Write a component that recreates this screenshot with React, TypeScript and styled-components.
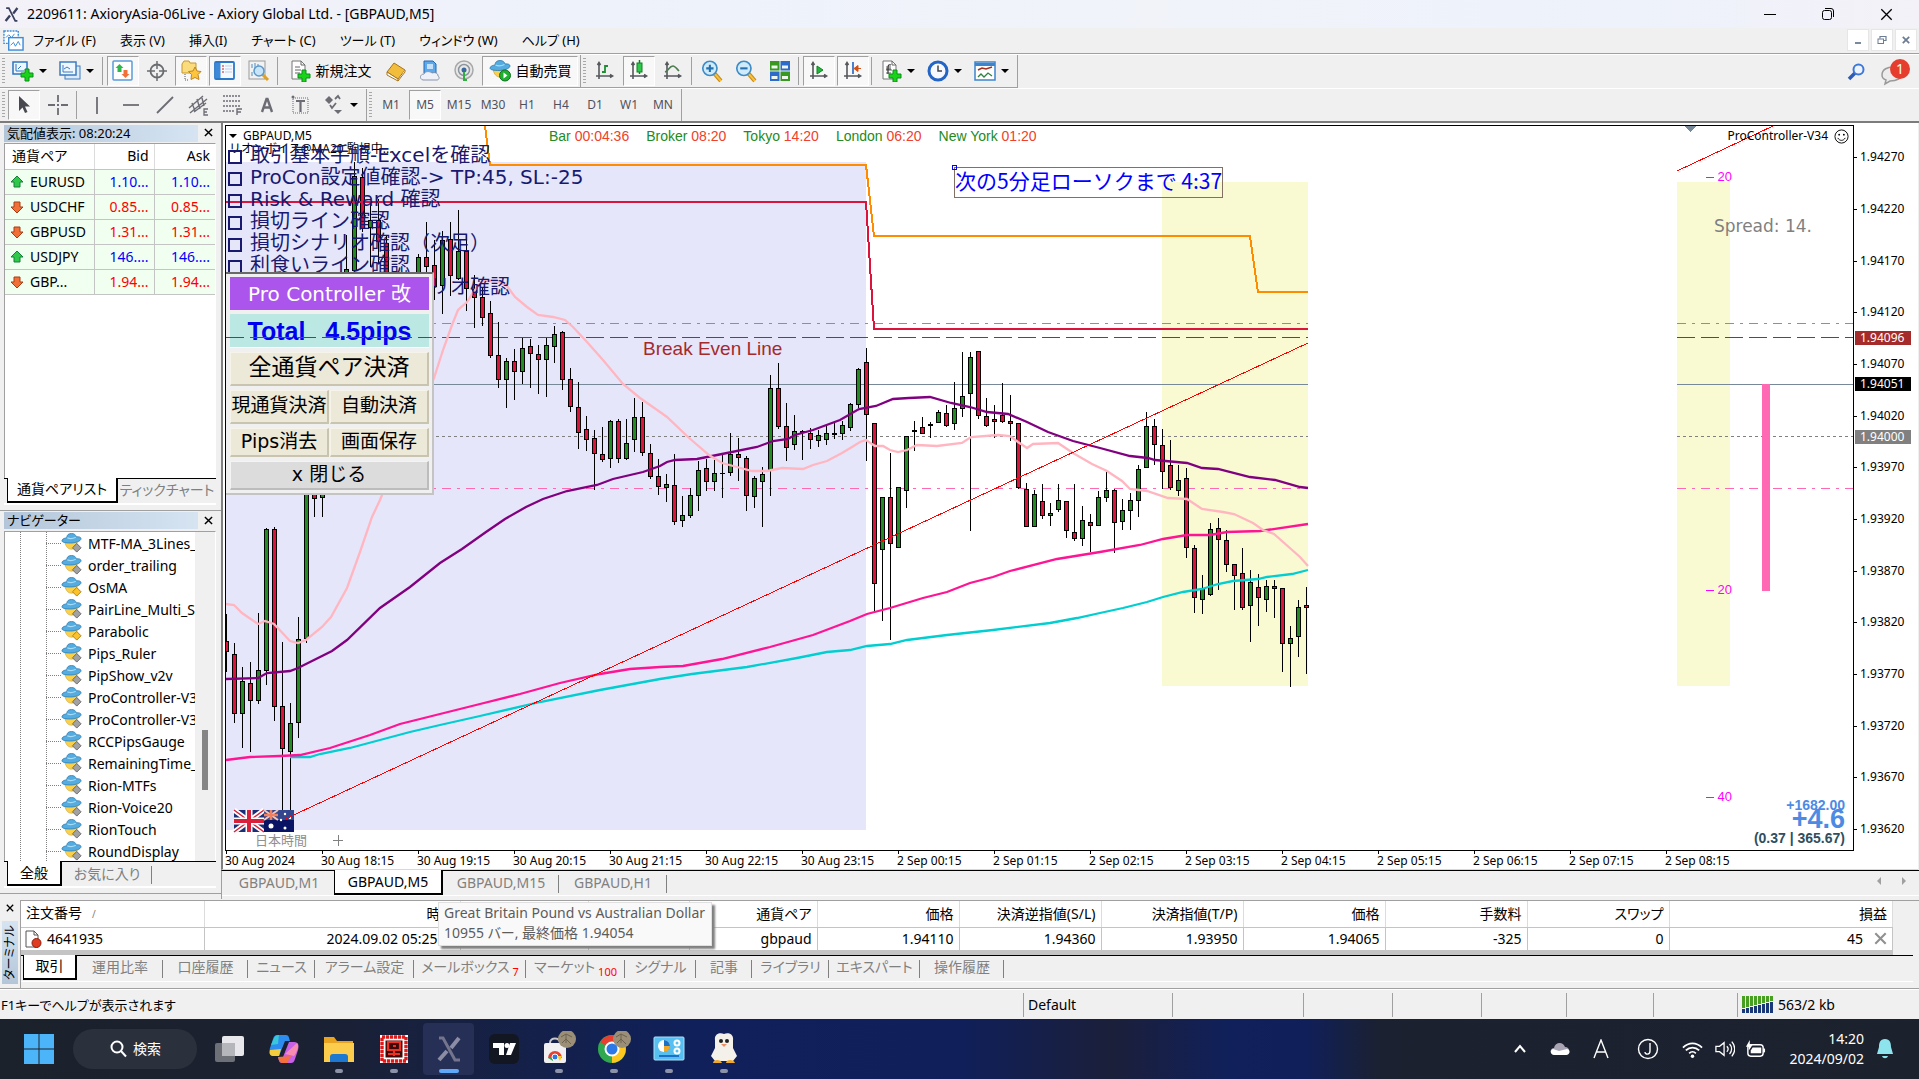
import React from "react";
import styled, { createGlobalStyle, css } from "styled-components";

const UI_FONT = `"Noto Sans", "Noto Sans CJK JP", sans-serif`;
const WIDE_FONT = `"DejaVu Sans", "Noto Sans CJK JP", sans-serif`;
const ARIAL = `"Liberation Sans", "Noto Sans CJK JP", sans-serif`;
const FACE = "#f0f0f0";

const Global = createGlobalStyle`
  * { box-sizing: border-box; }
  body { margin: 0; background: ${FACE}; font-family: ${UI_FONT}; font-size: 14px; line-height: 20px; color: #000; }
  button, input { font: inherit; color: inherit; margin: 0; }
  button { padding: 0; border: 0; background: none; }
  svg { display: block; }
`;

const Desktop = styled.div`
  display: flex;
  flex-direction: column;
  min-height: 100vh;
  overflow: hidden;
`;

/* ---------- title and menu ---------- */

const TitleBar = styled.header`
  display: flex;
  align-items: center;
  height: 28px;
  padding: 0 4px;
  background: linear-gradient(90deg, #f4f1f8, #edf2fb 30%, #f1f3f9 60%, #edf2fb 85%, #f4f1f8);
`;
const Title = styled.h1`
  flex: 1;
  margin: 0 0 0 8px;
  font-size: 14px;
  font-weight: 400;
  white-space: nowrap;
`;
const WindowButton = styled.button`
  display: grid;
  place-items: center;
  width: 58px;
  height: 28px;
`;
const MenuBar = styled.nav`
  display: flex;
  align-items: center;
  height: 26px;
  padding: 0 2px 1px 3px;
  border-bottom: 1px solid #a0a0a0;
`;
const MenuList = styled.div`
  flex: 1;
  display: flex;
  gap: 24px;
  padding-left: 9px;
`;
const MenuItem = styled.button`
  font-size: 13px;
  font-feature-settings: "palt";
  white-space: nowrap;
`;
const ChildButton = styled.button`
  display: grid;
  place-items: center;
  width: 22px;
  height: 22px;
  margin-left: 2px;
  background: #fff;
  border: 1px solid #e6e6e6;
`;

/* ---------- tool bars ---------- */

const ToolRow = styled.div<{ $last?: boolean }>`
  display: flex;
  height: ${(p) => (p.$last ? 35 : 34)}px;
  border-top: 1px solid #fff;
  ${(p) => p.$last && css`border-bottom: 2px solid #7c7c7c;`}
`;
const ToolGroup = styled.div<{ $line?: boolean }>`
  display: flex;
  align-items: center;
  padding: 0 1px 0 7px;
  border-right: 1px solid #a0a0a0;
  ${(p) => p.$line && css`border-bottom: 1px solid #a0a0a0;`}
  background: repeating-linear-gradient(180deg, #a8a8a8 0 1px, ${FACE} 1px 3px) 2px 3px / 3px 26px no-repeat;
`;
const ToolButton = styled.button<{ $w?: number; $on?: boolean }>`
  display: flex;
  align-items: center;
  justify-content: center;
  gap: 5px;
  width: ${(p) => p.$w ?? 32}px;
  height: 30px;
  margin: 0 1px;
  border: 1px solid transparent;
  white-space: nowrap;
  ${(p) => p.$on && css`background: #f8f8f8; border-color: #a0a0a0 #fff #fff #a0a0a0;`}
`;
const SplitButton = styled(ToolButton)`
  width: 45px;
  justify-content: flex-start;
  padding-left: 3px;
`;
const PeriodButton = styled(ToolButton)`
  font-size: 12px;
  color: #50505c;
`;
const Divider = styled.span`
  width: 1px;
  height: 28px;
  margin: 0 3px 0 1px;
  background: #a0a0a0;
`;
const Caret = styled.span`
  border: 4px solid transparent;
  border-top-color: #000;
  border-bottom: 0;
`;
const ToolEnd = styled.div`
  flex: 1;
  display: flex;
  justify-content: flex-end;
  align-items: center;
  gap: 12px;
  padding-right: 8px;
`;
const Notice = styled.button`
  position: relative;
  width: 32px;
  height: 28px;
`;
const Badge = styled.span`
  position: absolute;
  top: 1px;
  right: 1px;
  width: 20px;
  height: 20px;
  border-radius: 50%;
  background: #e53e2e;
  color: #fff;
`;

/* ---------- docked panels ---------- */

const Workspace = styled.main`
  flex: 1;
  display: grid;
  grid-template-columns: 221px minmax(0, 1fr);
`;
const Dock = styled.aside`
  display: flex;
  flex-direction: column;
  min-height: 0;
  padding-bottom: 5px;
`;
const Panel = styled.section<{ $grow: number }>`
  flex: ${(p) => p.$grow} 1 0;
  display: flex;
  flex-direction: column;
  min-height: 0;
  padding: 0 3px 5px 4px;
  border-bottom: 1px solid #a0a0a0;
`;
const PanelHead = styled.div`
  display: flex;
  align-items: center;
  height: 19px;
  margin-bottom: 1px;
`;
const PanelTitle = styled.h2`
  flex: 1;
  margin: 1px 0 0;
  padding-left: 3px;
  font-size: 13px;
  font-weight: 400;
  line-height: 17px;
  font-feature-settings: "palt";
  background: linear-gradient(90deg, #b3c6d9, #d6e4f2);
`;
const CloseButton = styled.button`
  display: grid;
  place-items: center;
  width: 20px;
  height: 18px;
`;
const PanelBox = styled.div`
  flex: 1;
  display: flex;
  flex-direction: column;
  min-height: 0;
  margin-right: 2px;
  overflow: hidden;
  background: #fff;
  border: 1px solid #a0a0a0;
  border-right-color: #fff;
  border-bottom: 0;
`;
const Quotes = styled.table`
  width: 100%;
  border-collapse: collapse;
  table-layout: fixed;
  th, td { height: 25px; padding: 0 5px; font-weight: 400; text-align: right; border: 1px solid #c4c4c4; border-left: 0; white-space: nowrap; }
  th { border-color: #dcdcdc; border-top: 0; border-bottom-color: #c4c4c4; font-feature-settings: "palt"; }
  th:first-child { text-align: left; padding-left: 7px; width: 89px; }
  th:last-child { width: 61px; }
  th:last-child, td:last-child { border-right: 0; }
  td { background: #f0fff0; }
`;
const Pair = styled.span`
  display: flex;
  align-items: center;
  gap: 6px;
`;
const Quote = styled.td<{ $up: boolean }>`
  color: ${(p) => (p.$up ? "#0000ff" : "#ff0000")};
`;
const Tabs = styled.div`
  display: flex;
  height: 27px;
  margin-right: 2px;
  padding-left: 3px;
  border-top: 1px solid #000;
  border-bottom: 2px solid #fff;
`;
const Tab = styled.button<{ $on?: boolean; $w: number; $bar?: boolean }>`
  position: relative;
  width: ${(p) => p.$w}px;
  height: 25px;
  margin-top: -1px;
  flex: none;
  color: #808080;
  font-feature-settings: "palt";
  white-space: nowrap;
  ${(p) => p.$on && css`color: #000; background: #fff; border: 1px solid #000; border-top: 0; border-right-width: 2px; border-bottom-width: 2px;`}
  ${(p) => p.$bar && css`background: linear-gradient(#808080, #808080) right 5px / 1px 18px no-repeat;`}
`;
const Count = styled.sub`
  font-size: 11px;
  line-height: 0;
  color: #ff0000;
`;
const Tree = styled.div`
  flex: 1;
  display: flex;
  min-height: 0;
`;
const Branches = styled.ul`
  flex: 1;
  min-width: 0;
  margin: 0;
  padding: 1px 0 0 15px;
  list-style: none;
  overflow: hidden;
  background: repeating-linear-gradient(180deg, #808080 0 1px, #fff 1px 2px) 15px 0 / 1px 100% no-repeat,
    repeating-linear-gradient(180deg, #808080 0 1px, #fff 1px 2px) 41px 0 / 1px 100% no-repeat;
`;
const Branch = styled.li`
  display: flex;
  align-items: center;
  height: 22px;
  padding-left: 26px;
  white-space: nowrap;
  &::before {
    content: "";
    flex: none;
    width: 15px;
    height: 1px;
    background: repeating-linear-gradient(90deg, #808080 0 1px, #fff 1px 2px);
  }
  svg { flex: none; margin-right: 6px; }
`;
const ScrollTrack = styled.div`
  flex: none;
  width: 20px;
  display: flex;
  align-items: flex-start;
  justify-content: center;
  background: ${FACE};
`;
const Thumb = styled.span`
  width: 6px;
  height: 60px;
  margin-top: 198px;
  background: #858585;
`;

/* ---------- chart ---------- */

const ChartWindow = styled.section`
  display: flex;
  flex-direction: column;
  min-width: 0;
`;
const ChartSheet = styled.div`
  flex: 1;
  display: grid;
  grid-template-columns: minmax(0, 1fr) 64px;
  grid-template-rows: minmax(0, 1fr) 18px;
  padding: 2px 0 0 2px;
  margin-right: 1px;
  background: #fff;
  border-left: 2px solid #808080;
  border-bottom: 1px solid #d8d8d8;
`;
const Plot = styled.div`
  position: relative;
  overflow: hidden;
  border: 1px solid #000;
  > svg { width: 100%; height: 100%; }
`;
const PriceAxis = styled.div`
  position: relative;
  font-size: 12px;
  line-height: 14px;
`;
const Price = styled.span<{ $y: number; $bg?: string }>`
  position: absolute;
  left: ${(p) => (p.$bg ? 1 : 0)}px;
  top: ${(p) => p.$y}%;
  margin-top: -7px;
  width: 56px;
  padding-left: ${(p) => (p.$bg ? 5 : 6)}px;
  ${(p) =>
    p.$bg
      ? css`background: ${p.$bg}; color: #fff;`
      : css`background: linear-gradient(#000, #000) 0 7px / 3px 1px no-repeat;`}
`;
const TimeAxis = styled.div`
  display: flex;
  overflow: hidden;
  font-size: 12px;
  line-height: 20px;
`;
const Time = styled.span`
  flex: 0 0 96px;
  white-space: nowrap;
  background: linear-gradient(#000, #000) 1px 0 / 1px 3px no-repeat;
`;
const ChartTabs = styled.div`
  display: flex;
  align-items: flex-start;
  height: 29px;
  padding-left: 2px;
  border-top: 1px solid #000;
  border-left: 1px solid #a0a0a0;
  box-shadow: inset 0 -3px ${FACE}, inset 0 -4px #fff;
`;
const TabArrows = styled.div`
  flex: 1;
  display: flex;
  justify-content: flex-end;
  gap: 14px;
  padding: 5px 10px 0 0;
`;

/* Labels that float over the plot */
const Floating = styled.div<{ $x?: number; $r?: number; $y: number; $size?: number; $color?: string; $bold?: boolean; $font?: string }>`
  position: absolute;
  ${(p) => (p.$r !== undefined ? css`right: ${p.$r}px;` : css`left: ${p.$x}px;`)}
  top: ${(p) => p.$y}px;
  font-family: ${(p) => p.$font ?? UI_FONT};
  font-size: ${(p) => p.$size ?? 12}px;
  line-height: 20px;
  font-weight: ${(p) => (p.$bold ? 700 : 400)};
  color: ${(p) => p.$color ?? "#000"};
  white-space: nowrap;
`;
const ChartName = styled(Floating)`
  display: flex;
  align-items: center;
  gap: 6px;
`;
const Clocks = styled(Floating)`
  display: flex;
  gap: 17px;
  color: #228b22;
  b { font-weight: 400; color: #f0402a; }
`;
const Countdown = styled(Floating)`
  height: 31px;
  line-height: 25px;
  border: 1px solid #827062;
  &::before {
    content: "";
    position: absolute;
    left: -3px;
    top: -3px;
    width: 3px;
    height: 3px;
    border: 1px solid #0000ff;
  }
`;
const CheckList = styled.ul`
  position: absolute;
  left: 2px;
  top: 18px;
  margin: 0;
  padding: 0;
  list-style: none;
  font-family: ${WIDE_FONT};
  font-size: 20px;
  line-height: 22px;
  color: #191970;
`;
const CheckItem = styled.li<{ $tail?: boolean }>`
  height: 22px;
  white-space: nowrap;
  padding-left: ${(p) => (p.$tail ? 202 : 0)}px;
`;
const CheckLabel = styled.label`
  display: flex;
  align-items: center;
  gap: 8px;
`;
const Check = styled.input`
  appearance: none;
  width: 14px;
  height: 14px;
  margin-top: 4px;
  border: 2px solid #191970;
`;
const Controller = styled.form`
  position: absolute;
  left: 0;
  top: 146px;
  width: 208px;
  display: grid;
  grid-template-columns: 1fr 1fr;
  gap: 4px 1px;
  padding: 3px 3px 3px 4px;
  background: ${FACE};
  border-top: 2px solid #696969;
  border-right: 2px solid #c4c4c4;
  border-bottom: 2px solid #c4c4c4;
  font-family: ${WIDE_FONT};
  font-size: 20px;
  &::after {
    content: "";
    position: absolute;
    left: 0;
    right: 0;
    top: 63px;
    height: 1px;
    background: repeating-linear-gradient(90deg, #a52a2a 0 18px, transparent 18px 24px);
  }
`;
const ControllerTitle = styled.div`
  grid-column: span 2;
  height: 33px;
  line-height: 34px;
  text-align: center;
  color: #fff;
  background: #ac55ec;
`;
const Total = styled.output`
  grid-column: span 2;
  display: flex;
  justify-content: center;
  gap: 20px;
  height: 34px;
  line-height: 35px;
  font-family: ${ARIAL};
  font-size: 25px;
  font-weight: 700;
  color: #0000f0;
  background: #bce8e4;
  border-bottom: 1px solid #fff;
`;
const Action = styled.button<{ $wide?: boolean; $h: number; $grey?: boolean; $size?: number }>`
  ${(p) => p.$wide && css`grid-column: span 2;`}
  height: ${(p) => p.$h}px;
  padding-bottom: 3px;
  font-size: ${(p) => p.$size ?? 19}px;
  line-height: 24px;
  white-space: nowrap;
  overflow: hidden;
  background: ${(p) => (p.$grey ? "#dcdcdc" : "#ece9d8")};
  border: solid;
  border-width: 1px 2px 2px 1px;
  border-color: ${(p) => (p.$grey ? "#f4f4f4 #bcbcbc #bcbcbc #f4f4f4" : "#f6f4ea #c8c4b0 #c8c4b0 #f6f4ea")};
`;

/* ---------- terminal ---------- */

const Terminal = styled.section`
  position: relative;
  display: grid;
  grid-template-columns: 20px minmax(0, 1fr);
  height: 90px;
  border-bottom: 1px solid #a0a0a0;
`;
const TerminalSide = styled.div`
  display: flex;
  flex-direction: column;
  align-items: center;
  gap: 4px;
`;
const TerminalTitle = styled.h2`
  flex: 1;
  width: 16px;
  margin: 0 0 4px;
  padding-top: 4px;
  font-size: 12px;
  line-height: 16px;
  font-weight: 400;
  font-feature-settings: "palt";
  writing-mode: vertical-rl;
  text-orientation: sideways;
  transform: rotate(180deg);
  white-space: nowrap;
  background: linear-gradient(0deg, #d6e4f2, #b3c6d9);
`;
const TerminalBody = styled.div`
  margin-top: 1px;
  border-top: 1px solid #a0a0a0;
  border-left: 1px solid #a0a0a0;
`;
const Orders = styled.table`
  width: calc(100% - 26px);
  border-collapse: collapse;
  table-layout: fixed;
  background: #fff;
  border-bottom: 5px solid #c4c4c4;
  th, td { height: 25px; padding: 0 5px; font-weight: 400; line-height: 20px; text-align: right; white-space: nowrap; border-right: 1px solid #dcdcdc; }
  th { height: 26px; border-bottom: 1px solid #c4c4c4; font-feature-settings: "palt"; }
  td { border-color: #c4c4c4; }
  th:first-child { text-align: left; }
  td:first-child { padding-left: 3px; }
`;
const OrderId = styled.span`
  display: flex;
  align-items: center;
  gap: 5px;
`;
const SortMark = styled.span`
  margin-left: 10px;
  font-size: 10px;
  color: #808080;
`;
const OpenTime = styled.td`
  && { padding-right: 22px; }
`;
const Profit = styled.span`
  display: flex;
  align-items: center;
  justify-content: flex-end;
  gap: 11px;
`;
const TerminalTabs = styled(Tabs)`
  margin-right: 6px;
  padding-left: 2px;
  border-bottom: 1px solid #fff;
`;
const Hint = styled.div`
  position: absolute;
  left: 438px;
  top: 3px;
  width: 274px;
  height: 44px;
  padding: 0 5px;
  color: #5c5c5c;
  background: #f9f9f9;
  border: 1px solid #e0e0e0;
  box-shadow: 3px 3px 2px #808080;
  white-space: nowrap;
  font-feature-settings: "palt";
`;

const StatusBar = styled.footer`
  display: flex;
  align-items: center;
  height: 30px;
  padding: 0 0 0 1px;
  border-top: 1px solid #fff;
  font-feature-settings: "palt";
`;
const StatusText = styled.span`
  flex: 1;
  font-size: 13px;
`;
const StatusCell = styled.span<{ $w: number }>`
  display: flex;
  align-items: center;
  gap: 4px;
  width: ${(p) => p.$w}px;
  height: 24px;
  padding-left: 4px;
  border-left: 1px solid #a0a0a0;
  white-space: nowrap;
`;

/* ---------- task bar ---------- */

const TaskBar = styled.footer`
  display: flex;
  align-items: center;
  height: 60px;
  padding: 0 23px 0 12px;
  color: #fff;
  background: linear-gradient(90deg, #1b222b 0, #1b2130 15%, #10205a 36%, #101f5a 50%, #1b1f3a 58%, #10205a 64%, #101f5a 68%, #1b2130 72%, #1c222d 100%);
`;
const Start = styled.button`
  display: grid;
  place-items: center;
  width: 54px;
  height: 50px;
`;
const Search = styled.button`
  display: flex;
  align-items: center;
  justify-content: center;
  gap: 6px;
  width: 124px;
  height: 40px;
  margin: 0 4px 0 7px;
  border-radius: 20px;
  background: #2b313c;
`;
const App_ = styled.button<{ $state?: "open" | "active" }>`
  display: grid;
  justify-items: center;
  align-content: end;
  gap: 4px;
  width: 51px;
  height: 52px;
  margin: 0 2px;
  padding-bottom: 2px;
  border-radius: 4px;
  ${(p) => p.$state === "active" && css`background: #262f56;`}
  &::after {
    content: "";
    width: ${(p) => (p.$state === "active" ? 20 : 8)}px;
    height: 4px;
    border-radius: 2px;
    background: ${(p) => (p.$state === "active" ? "#60a8f8" : p.$state ? "#8c92a8" : "transparent")};
  }
`;
const Tray = styled.div`
  flex: 1;
  display: flex;
  align-items: center;
  justify-content: flex-end;
`;
const TrayButton = styled.button<{ $w: number }>`
  display: grid;
  place-items: center;
  width: ${(p) => p.$w}px;
  height: 40px;
`;
const Clock = styled.time`
  width: 94px;
  margin-right: 10px;
  font-size: 14px;
  line-height: 20px;
  text-align: right;
`;

/* ---------- icons ---------- */

type Draw = { children: React.ReactNode; s?: number; box?: number };
const Icon = ({ children, s = 22, box = 22 }: Draw) => (
  <svg width={s} height={s} viewBox={`0 0 ${box} ${box}`} fill="none" aria-hidden="true">{children}</svg>
);
const Plus = ({ x = 14, y = 15 }) => (
  <path d={`M${x - 2} ${y - 6}h4v4h4v4h-4v4h-4v-4h-4v-4h4z`} fill="#19d319" stroke="#0a8f1a" />
);
const Axes = () => <path d="M5 3v16M2 16h16M3.500 5L5 2.500 6.500 5M16 14.500l2.500 1.500-2.500 1.500" stroke="#55585c" strokeWidth="1.600" />;
const Sheet = () => (
  <>
    <path d="M3 1h9l4 4v14H3z" fill="#fdfdfd" stroke="#777" />
    <path d="M12 1v4h4M6 7h5M6 10h6M6 13h5" stroke="#666" />
  </>
);
const Lens = ({ sign }: { sign: string }) => (
  <Icon s={23}>
    <path d="M13 13l6 7" stroke="#c98a10" strokeWidth="4" /><path d="M13 13l6 7" stroke="#f6c244" strokeWidth="2" />
    <circle cx="8.500" cy="8" r="6.800" fill="#cfeafa" stroke="#3c8cc8" strokeWidth="1.600" />
    <path d={sign} stroke="#2471b0" strokeWidth="2" />
  </Icon>
);
const Hat = ({ tag }: { tag: React.ReactNode }) => (
  <>
    <path d="M4 9c1 6 4 8 7 8s6-3 6-8z" fill="#fbd04a" stroke="#c49a2c" strokeWidth=".6" />
    <path d="M1 8c0-2 4-3 5-3 0-3 2-4.500 5-4.500S15.500 2 16 4c3-.5 5 .5 5 2 0 2.500-6 4.500-11 4.500S1 10 1 8z" fill="#54ace0" stroke="#2c7cb0" strokeWidth=".8" />
    <path d="M6.500 5c3 1.500 6 1 9-.5" stroke="#a6dcf6" strokeWidth="1.200" />
    {tag}
  </>
);
const HatIcon = ({ gold }: { gold?: boolean }) => (
  <Icon s={21}>
    <Hat tag={<path d="M16.500 11l4.500 4.500-4.500 4.500-4.500-4.500z" fill={gold ? "#fcc22c" : "#a2a2a2"} stroke={gold ? "#b07c10" : "#666"} />} />
  </Icon>
);
const Arrow = ({ up }: { up: boolean }) => (
  <Icon s={14} box={14}>
    {up ? <path d="M7 1l6 6h-3v5H4V7H1z" fill="#2fc84a" stroke="#14803a" /> : <path d="M7 13l6-6h-3V2H4v5H1z" fill="#f07038" stroke="#a83c14" />}
  </Icon>
);
const Cross = ({ s = 9, c = "#000", w = 1.6 }) => (
  <svg width={s} height={s} viewBox="0 0 10 10" aria-hidden="true"><path d="M1 1l8 8M9 1L1 9" stroke={c} strokeWidth={w} /></svg>
);
const AxioryMark = ({ s = 14, c = "#3a3f5c" }) => (
  <svg width={s} height={s} viewBox="0 0 14 14" fill="none" aria-hidden="true">
    <path d="M2 1h2.500l6 12h2" stroke={c} strokeWidth="1.600" /><path d="M12.500 1L8.600 6.200M5.600 8L1.500 13" stroke={c} strokeWidth="2.200" />
  </svg>
);
const Avatar = () => (
  <>
    <circle cx="25" cy="8" r="9" fill="#9b8f78" /><path d="M19 6l5-3 6 3M20 12l4-4 5 5M24 3v9" stroke="#6c624f" />
  </>
);

/* ---------- data ---------- */

type Candle = [number, number, number, number, number, 0 | 1];
/* bar index, high, body top, body bottom, low, rising */
const candles: Candle[] = [
  [0, 614, 641, 652, 672, 0], [1, 643, 654, 714, 723, 0], [2, 667, 681, 714, 748, 1], [3, 662, 683, 701, 752, 0],
  [4, 613, 670, 701, 704, 1], [5, 528, 529, 671, 685, 1], [6, 527, 529, 707, 721, 0], [7, 642, 706, 749, 815, 0],
  [8, 703, 723, 752, 815, 1], [9, 617, 639, 723, 738, 1], [10, 400, 400, 639, 643, 1], [11, 440, 440, 499, 517, 0],
  [12, 440, 440, 498, 517, 1], [15, 235, 269, 400, 400, 1], [16, 162, 176, 271, 272, 1], [17, 168, 177, 229, 232, 0],
  [18, 203, 220, 228, 267, 1], [19, 199, 220, 242, 263, 0], [20, 235, 243, 300, 300, 0], [24, 254, 257, 277, 290, 1],
  [25, 222, 257, 267, 290, 0], [26, 240, 265, 287, 300, 0], [27, 231, 240, 286, 314, 1], [28, 222, 239, 276, 296, 0],
  [29, 210, 251, 279, 280, 1], [30, 235, 251, 289, 311, 0], [31, 275, 289, 298, 328, 0], [32, 287, 297, 318, 326, 0],
  [33, 301, 313, 356, 358, 0], [34, 322, 355, 380, 388, 0], [35, 358, 361, 380, 408, 1], [36, 349, 361, 372, 400, 0],
  [37, 338, 348, 372, 384, 1], [38, 339, 346, 354, 388, 0], [39, 345, 354, 360, 394, 0], [40, 338, 345, 360, 397, 1],
  [41, 326, 334, 347, 363, 1], [42, 331, 332, 380, 390, 0], [43, 368, 379, 407, 412, 0], [44, 382, 407, 433, 449, 0],
  [45, 416, 429, 440, 451, 0], [46, 430, 438, 454, 490, 0], [47, 427, 454, 460, 462, 0], [48, 420, 421, 459, 468, 1],
  [49, 419, 421, 459, 463, 0], [50, 419, 443, 459, 460, 1], [51, 398, 417, 440, 452, 1], [52, 402, 417, 453, 456, 0],
  [53, 444, 453, 477, 479, 0], [54, 459, 476, 487, 495, 0], [55, 474, 484, 488, 502, 1], [56, 454, 485, 522, 525, 0],
  [57, 496, 515, 521, 527, 1], [58, 488, 495, 516, 518, 1], [59, 461, 470, 496, 511, 1], [60, 459, 468, 482, 491, 0],
  [61, 460, 473, 482, 491, 1], [62, 453, 473, 474, 498, 0], [63, 433, 454, 473, 476, 1], [64, 438, 454, 458, 481, 0],
  [65, 456, 458, 496, 511, 0], [66, 476, 478, 497, 508, 1], [67, 467, 474, 482, 527, 1], [68, 375, 388, 470, 496, 1],
  [69, 363, 388, 427, 429, 0], [70, 403, 426, 448, 461, 0], [71, 415, 431, 445, 450, 1], [72, 430, 431, 433, 460, 0],
  [73, 428, 433, 440, 449, 0], [74, 430, 435, 441, 447, 1], [75, 426, 433, 440, 445, 1], [76, 422, 433, 435, 439, 0],
  [77, 421, 425, 434, 440, 1], [78, 403, 404, 428, 431, 1], [79, 368, 369, 405, 408, 1], [80, 348, 362, 415, 461, 0],
  [81, 423, 423, 584, 611, 0], [82, 497, 497, 550, 621, 1], [83, 453, 497, 544, 640, 0], [84, 487, 487, 548, 548, 1],
  [85, 436, 436, 491, 508, 1], [86, 421, 430, 432, 451, 0], [87, 417, 427, 434, 434, 0], [88, 422, 424, 426, 438, 0],
  [89, 410, 412, 423, 423, 1], [90, 405, 413, 426, 427, 0], [91, 382, 408, 424, 430, 1], [92, 352, 396, 409, 417, 1],
  [93, 352, 357, 394, 531, 1], [94, 351, 351, 416, 419, 0], [95, 398, 416, 426, 427, 0], [96, 405, 419, 422, 438, 0],
  [97, 383, 415, 422, 423, 0], [98, 395, 421, 424, 441, 0], [99, 423, 423, 488, 489, 0], [100, 483, 489, 527, 527, 0],
  [101, 490, 494, 527, 527, 1], [102, 484, 501, 516, 519, 0], [103, 503, 513, 516, 526, 1], [104, 484, 500, 510, 512, 1],
  [105, 501, 501, 531, 538, 0], [106, 484, 532, 539, 541, 0], [107, 506, 520, 539, 546, 1], [108, 514, 522, 526, 552, 0],
  [109, 491, 497, 526, 526, 1], [110, 472, 490, 498, 502, 1], [111, 489, 490, 523, 553, 0], [112, 499, 510, 522, 530, 1],
  [113, 493, 500, 511, 530, 1], [114, 465, 469, 501, 517, 1], [115, 412, 426, 468, 468, 1], [116, 419, 426, 445, 465, 0],
  [117, 429, 445, 472, 489, 0], [118, 440, 465, 488, 490, 0], [119, 465, 480, 491, 496, 1], [120, 468, 478, 548, 558, 0],
  [121, 545, 548, 598, 613, 0], [122, 575, 588, 600, 614, 1], [123, 523, 529, 595, 596, 1], [124, 518, 528, 540, 590, 0],
  [125, 530, 540, 565, 572, 0], [126, 564, 564, 576, 610, 0], [127, 548, 573, 608, 610, 0], [128, 570, 582, 606, 642, 1],
  [129, 574, 587, 598, 626, 0], [130, 580, 586, 600, 612, 1], [131, 580, 586, 589, 618, 0], [132, 588, 588, 644, 672, 0],
  [133, 626, 638, 644, 687, 1], [134, 600, 607, 637, 657, 1], [135, 587, 605, 608, 674, 0],
];

const averages: [string, string][] = [
  ["#00ced1", "290,757 310,757 320,754 350,748 380,740 410,732 440,725 480,716 540,702 600,690 660,679 692,674 747,667 797,658 827,652 850,650 867,646 890,644 907,640 947,635 993,630 1050,623 1077,618 1100,613 1123,608 1147,602 1163,597 1183,592 1202,589 1218,584 1233,581 1258,579 1267,577 1292,574 1308,570"],
  ["#ff1493", "226,760 250,757 280,756 300,755 330,748 370,735 400,724 440,714 480,704 520,694 560,683 600,674 630,669 660,667 683,666 722,659 770,647 813,635 850,621 867,614 890,608 923,598 947,592 970,583 993,577 1010,571 1057,559 1100,552 1140,545 1163,539 1187,535 1210,535 1227,532 1260,531 1308,524"],
  ["#800080", "226,679 258,678 267,673 290,671 298,668 310,662 332,651 347,640 380,608 410,587 440,563 462,549 486,532 505,519 526,507 543,499 567,491 597,485 613,479 643,472 660,466 667,462 675,460 697,459 722,454 757,447 773,441 788,439 795,435 813,430 840,420 859,409 876,406 893,399 909,398 930,397 951,403 970,407 987,412 1008,414 1027,422 1048,432 1073,441 1100,448 1130,456 1148,458 1155,460 1187,463 1202,468 1218,469 1250,477 1275,480 1300,487 1308,488"],
  ["#ffb6c1", "226,604 234,605 242,613 258,624 265,621 274,624 290,641 298,643 306,640 322,627 331,617 347,588 360,552 372,517 380,500 400,450 434,378 443,350 452,325 458,310 467,302 474,291 483,281 497,281 507,286 515,297 527,307 538,315 553,317 565,320 573,327 587,342 603,360 623,384 640,398 660,412 667,417 688,437 709,455 722,463 737,467 752,471 767,471 782,468 803,469 813,465 827,461 842,453 852,447 860,442 866,440 875,446 883,446 890,450 898,452 907,450 917,445 937,446 962,443 971,437 998,435 1010,436 1018,442 1027,448 1033,444 1058,443 1073,453 1092,464 1107,471 1122,481 1130,489 1147,491 1168,498 1187,499 1202,509 1223,512 1234,514 1253,523 1263,530 1274,534 1300,557 1308,566"],
];

const levels: [number, string, string?][] = [
  [323, "#32cd50", "9 6 3 6"], [337, "#a52a2a", "18 6"], [384, "#778899"], [436, "#808080", "3 3"], [488, "#ff69b4", "9 6 3 6"],
];

const prices: [string, number][] = [
  ["1.94270", 157], ["1.94220", 209], ["1.94170", 261], ["1.94120", 312], ["1.94070", 364], ["1.94020", 416], ["1.93970", 467],
  ["1.93920", 519], ["1.93870", 571], ["1.93820", 622], ["1.93770", 674], ["1.93720", 726], ["1.93670", 777], ["1.93620", 829],
];
const tags: [string, number, string][] = [["1.94096", 338, "#a52a2a"], ["1.94051", 384, "#000"], ["1.94000", 437, "#808080"]];
const share = (y: number) => ((y - 125) / 726) * 100;

const times = [
  "30 Aug 2024", "30 Aug 18:15", "30 Aug 19:15", "30 Aug 20:15", "30 Aug 21:15", "30 Aug 22:15", "30 Aug 23:15", "2 Sep 00:15",
  "2 Sep 01:15", "2 Sep 02:15", "2 Sep 03:15", "2 Sep 04:15", "2 Sep 05:15", "2 Sep 06:15", "2 Sep 07:15", "2 Sep 08:15",
];
const quotes: [string, string, boolean][] = [
  ["EURUSD", "1.10...", true], ["USDCHF", "0.85...", false], ["GBPUSD", "1.31...", false], ["USDJPY", "146....", true], ["GBP...", "1.94...", false],
];
const indicators = [
  "MTF-MA_3Lines_", "order_trailing", "OsMA", "PairLine_Multi_S", "Parabolic", "Pips_Ruler", "PipShow_v2v", "ProController-V3",
  "ProController-V3", "RCCPipsGauge", "RemainingTime_", "Rion-MTFs", "Rion-Voice20", "RionTouch", "RoundDisplay",
];
const builtIn = ["OsMA", "Parabolic"];
const checks = ["取引基本手順-Excelを確認", "ProCon設定値確認-> TP:45, SL:-25", "Risk & Reward 確認", "損切ライン確認", "損切シナリオ確認（次足）", "利食いライン確認"];
const zones = [["Bar", "00:04:36"], ["Broker", "08:20"], ["Tokyo", "14:20"], ["London", "06:20"], ["New York", "01:20"]];
const menus = ["ファイル (F)", "表示 (V)", "挿入(I)", "チャート (C)", "ツール (T)", "ウィンドウ (W)", "ヘルプ (H)"];
const periods = ["M1", "M5", "M15", "M30", "H1", "H4", "D1", "W1", "MN"];
const terminalTabs: [string, number, string?][] = [
  ["運用比率", 86], ["口座履歴", 85], ["ニュース", 67], ["アラーム設定", 99], ["メールボックス", 112, "7"], ["マーケット", 99, "100"],
  ["シグナル", 71], ["記事", 56], ["ライブラリ", 77], ["エキスパート", 91], ["操作履歴", 84],
];
const orderCols: [string, number?][] = [
  ["注文番号", 183], ["時間", 256], ["", 128], ["", 101], ["通貨ペア", 128], ["価格", 142], ["決済逆指値(S/L)", 142], ["決済指値(T/P)", 142],
  ["価格", 142], ["手数料", 142], ["スワップ", 142], ["損益"],
];

/* ---------- parts ---------- */

const ChartDrawing = () => (
  <svg viewBox="226 126 1627 724" preserveAspectRatio="none" fill="none" shapeRendering="crispEdges" role="img" aria-label="GBPAUD,M5">
    <rect x="226" y="162" width="640" height="668" fill="#e6e6fa" />
    <rect x="1162" y="182" width="146" height="504" fill="#fafad2" />
    <rect x="1677" y="182" width="53" height="504" fill="#fafad2" />
    {levels.map(([y, color, dash]) => (
      <path key={y} d={`M226 ${y}.500H1308M1677 ${y}.500H1853`} stroke={color} strokeDasharray={dash} />
    ))}
    <rect x="1762" y="384" width="8" height="207" fill="#ff69b4" />
    {candles.map(([k, high, top, bottom, low, up]) => {
      const x = 226 + k * 8;
      return (
        <g key={k}>
          <rect x={x} y={high} width="1" height={low - high} fill="#000" />
          <rect x={x - 2} y={top} width="5" height={bottom - top} fill="#000" />
          {bottom - top > 2 && <rect x={x - 1} y={top + 1} width="3" height={bottom - top - 2} fill={up ? "#228b22" : "#dc143c"} />}
        </g>
      );
    })}
    <path d="M485 126L490 165H866L874 236H1250L1258 292H1308" stroke="#ff8c00" strokeWidth="2" />
    <path d="M226 202H866L874 329H1308" stroke="#dc143c" strokeWidth="2" />
    {averages.map(([color, points]) => <polyline key={color} points={points} stroke={color} strokeWidth="2.300" shapeRendering="auto" />)}
    <path d="M283 820L1308 343M1677 171L1773 126" stroke="#ff0000" />
    <path d="M1684 126h12l-6 6z" fill="#778899" />
    <path d="M1706 177.500h8M1706 590.500h8M1706 797.500h8" stroke="#ff00ff" />
    <g shapeRendering="auto">
      <rect x="234" y="810" width="30" height="22" fill="#1a2f78" />
      <path d="M234 810l30 22M264 810l-30 22" stroke="#fff" strokeWidth="5" />
      <path d="M234 810l30 22M264 810l-30 22" stroke="#d8203a" strokeWidth="1.500" />
      <path d="M249 810v22M234 821h30" stroke="#fff" strokeWidth="7" /><path d="M249 810v22M234 821h30" stroke="#d8203a" strokeWidth="4" />
      <rect x="264" y="810" width="30" height="22" fill="#0a1464" /><rect x="264" y="810" width="30" height="10" fill="#5068a8" opacity=".6" />
      <path d="M264 810l14 10M278 810l-14 10" stroke="#f4c8b8" strokeWidth="2" /><path d="M271 810v10M264 815h14" stroke="#f08060" strokeWidth="2.500" />
      <circle cx="271" cy="826" r="2.500" fill="#fff" /><circle cx="285" cy="814" r="1.200" fill="#fff" /><circle cx="290" cy="818" r="1.200" fill="#fff" />
      <circle cx="281" cy="820" r="1.200" fill="#fff" /><circle cx="285" cy="828" r="1.500" fill="#fff" />
    </g>
    <path d="M283 820L294 815" stroke="#ff0000" />
    <path d="M333 840.500h10M338.500 835v11" stroke="#808080" />
  </svg>
);

const MainTools = () => (
  <ToolGroup $line>
    <SplitButton aria-label="新規チャート"><Icon><rect x="1" y="2" width="14" height="12" fill="#eef6ff" stroke="#2c74c0" strokeWidth="1.500" /><path d="M4 4v7h8M6 9l3-3" stroke="#2c74c0" /><Plus x={15} y={15} /></Icon><Caret /></SplitButton>
    <SplitButton aria-label="チャート組表示"><Icon><rect x="6" y="6" width="15" height="13" fill="#dceafa" stroke="#3c7cc0" /><rect x="1" y="2" width="16" height="13" fill="#eef6ff" stroke="#3c7cc0" strokeWidth="1.500" /><path d="M4 5v7h10M5 9l3-2 3 2" stroke="#3c7cc0" /></Icon><Caret /></SplitButton>
    <Divider />
    <ToolButton $on aria-label="気配値表示"><Icon><rect x="1" y="1" width="19" height="19" rx="1" fill="#fff" stroke="#5a9ad8" strokeWidth="1.500" /><path d="M7.500 4l4 4h-2v4h-4V8h-2z" fill="#2fb84a" /><path d="M13.500 18l4-4h-2v-4h-4v4h-2z" fill="#f07038" /></Icon></ToolButton>
    <ToolButton aria-label="データウィンドウ"><Icon><circle cx="11" cy="11" r="6.500" stroke="#6a6d70" strokeWidth="1.800" /><path d="M11 1v8M11 13v8M1 11h8M13 11h8" stroke="#6a6d70" strokeWidth="1.500" /></Icon></ToolButton>
    <ToolButton $on aria-label="ナビゲーター"><Icon><path d="M2 4l2-3h5l1 2h6v10H2z" fill="#fbdc7c" stroke="#c49630" /><path d="M5 14v6h4" stroke="#555" strokeDasharray="1 1" /><path d="M15 7l2 4 4 .5-3 3 1 5-4-2-4 2 .5-5-3-3 4.500-.5z" fill="#fcc53c" stroke="#c08420" /></Icon></ToolButton>
    <ToolButton $on aria-label="ターミナル"><Icon><rect x="1" y="2" width="19" height="17" rx="1" fill="#f6faff" stroke="#2c78c8" strokeWidth="1.800" /><rect x="2" y="3" width="4.500" height="15" fill="#3c8ad8" /><path d="M8 6h2M8 9h2M8 12h2" stroke="#c02020" /><path d="M11 6h7M11 9h7M11 12h7" stroke="#bcd0e8" /></Icon></ToolButton>
    <ToolButton aria-label="ストラテジーテスター"><Icon><rect x="1" y="1" width="16" height="18" fill="#f2f2f2" stroke="#999" /><path d="M4 4v4M7 3v5M4 12v4M10 4v3" stroke="#4c8cc8" /><path d="M14 14l6 6" stroke="#e0a020" strokeWidth="3" /><circle cx="11" cy="11" r="5" fill="#c8e4f8" stroke="#5c98c8" strokeWidth="1.500" /></Icon></ToolButton>
    <Divider />
    <ToolButton $w={96}><Icon><Sheet /><Plus x={15} y={16} /></Icon>新規注文</ToolButton>
    <ToolButton aria-label="MetaEditor"><Icon><path d="M2 12L9 3l11 7-7 9z" fill="#f3bd3c" stroke="#a87418" /><path d="M2 12v3l11 6v-2zM13 21l7-9v-2" fill="#fff" stroke="#a87418" /></Icon></ToolButton>
    <ToolButton aria-label="MQL5"><Icon><path d="M5 1h9l3 3v9H5z" fill="#5ca8ec" stroke="#2468b0" /><path d="M8 4h6v5H8z" fill="#c4e0fa" /><path d="M4 20c-4-1-3-6 1-6 1-3 6-3 8-1 3-1 6 0 6 3 2 1 1 4-1 4z" fill="#eef2f8" stroke="#8894ac" /></Icon></ToolButton>
    <ToolButton aria-label="シグナル"><Icon><circle cx="11" cy="10" r="9" fill="#e8e8e8" stroke="#a8a8a8" strokeWidth="1.500" /><circle cx="11" cy="10" r="5.500" stroke="#8c949c" strokeWidth="1.500" /><circle cx="11" cy="10" r="2.500" fill="#3c68a0" /><path d="M11 12v8h3" stroke="#30b040" strokeWidth="2" /></Icon></ToolButton>
    <ToolButton $on $w={96}><Icon><Hat tag={<><circle cx="16" cy="15.500" r="5.500" fill="#20b030" stroke="#107020" /><path d="M14.500 12.500l4 3-4 3z" fill="#fff" /></>} /></Icon>自動売買</ToolButton>
  </ToolGroup>
);

const ChartTools = () => (
  <ToolGroup $line>
    <ToolButton aria-label="バーチャート"><Icon><Axes /><path d="M11 13V5M11 6h3M8 12h3" stroke="#1c9030" strokeWidth="1.800" /></Icon></ToolButton>
    <ToolButton $on aria-label="ローソク足"><Icon><Axes /><path d="M11.500 0v14" stroke="#108020" strokeWidth="1.500" /><rect x="9" y="3" width="5" height="9" fill="#30c84c" stroke="#108020" /></Icon></ToolButton>
    <ToolButton aria-label="ラインチャート"><Icon><Axes /><path d="M3 12c4-1 4-6 8-6 2 0 4 3 6 5" stroke="#4c7c50" strokeWidth="1.600" /></Icon></ToolButton>
    <Divider />
    <ToolButton aria-label="ズームイン"><Lens sign="M5 8h7M8.500 4.500v7" /></ToolButton>
    <ToolButton aria-label="ズームアウト"><Lens sign="M5 8h7" /></ToolButton>
    <ToolButton aria-label="整列"><Icon><rect x="1" y="1" width="9.500" height="9.500" fill="#389820" /><rect x="11.500" y="1" width="9.500" height="9.500" fill="#2c6cc8" /><rect x="1" y="11.500" width="9.500" height="9.500" fill="#2c6cc8" /><rect x="11.500" y="11.500" width="9.500" height="9.500" fill="#389820" /><path d="M2.500 5.500h6v3h-6zM13 5.500h6v3h-6zM2.500 16h6v3h-6zM13 16h6v3h-6z" fill="#eef6ee" /></Icon></ToolButton>
    <Divider />
    <ToolButton $on aria-label="自動スクロール"><Icon><Axes /><path d="M9 6l6 4-6 4z" fill="#20b83c" stroke="#108020" /></Icon></ToolButton>
    <ToolButton $on aria-label="チャートシフト"><Icon><Axes /><path d="M11 2v12" stroke="#2060c0" strokeWidth="1.600" /><path d="M12 8.500l4-3v6zM16 8.500h3" fill="#d05018" stroke="#d05018" /></Icon></ToolButton>
    <Divider />
    <SplitButton aria-label="インディケーター"><Icon><Sheet /><path d="M11 5c-3-1-3 1-3 4v5M6 9h5" stroke="#333" strokeWidth="1.200" /><Plus x={15} y={16} /></Icon><Caret /></SplitButton>
    <SplitButton aria-label="時間足"><Icon><circle cx="11" cy="11" r="9" fill="#f6faff" stroke="#2464c4" strokeWidth="3" /><path d="M11 5.500V11h4" stroke="#444" strokeWidth="1.500" /></Icon><Caret /></SplitButton>
    <SplitButton aria-label="定型チャート"><Icon><rect x="1" y="2" width="20" height="18" fill="#fff" stroke="#3c84cc" strokeWidth="1.500" /><path d="M1 4.500h20" stroke="#3c84cc" strokeWidth="3" /><path d="M4 10l4-2 4 1 6-2" stroke="#a03020" strokeWidth="1.500" /><path d="M4 17l3-3 3 3 4-4 4 3" stroke="#308040" strokeWidth="1.300" /></Icon><Caret /></SplitButton>
  </ToolGroup>
);

const g = "#6c6c74";
const LineTools = () => (
  <ToolGroup>
    <ToolButton $on aria-label="カーソル"><Icon><path d="M6 2v15l3.500-3.500L12 19l2.500-1-2.500-5.500h5z" fill="#484850" /></Icon></ToolButton>
    <ToolButton aria-label="クロスヘア"><Icon><path d="M11 1v7M11 14v7M1 11h7M14 11h7M10 11h2" stroke={g} strokeWidth="1.800" /></Icon></ToolButton>
    <Divider />
    <ToolButton aria-label="垂直線"><Icon><path d="M11 3v17" stroke={g} strokeWidth="1.800" /></Icon></ToolButton>
    <ToolButton aria-label="水平線"><Icon><path d="M3 11h16" stroke={g} strokeWidth="1.800" /></Icon></ToolButton>
    <ToolButton aria-label="トレンドライン"><Icon><path d="M3 19L19 3" stroke={g} strokeWidth="1.800" /></Icon></ToolButton>
    <ToolButton aria-label="等距離チャネル"><Icon><path d="M1 14L15 2M2 19L19 5M6 18L18 9M4 9l3 8M9 5l3 10M14 4l2 8" stroke={g} strokeWidth="1.400" /><path d="M20 15h-4v6h4M16 18h3" stroke={g} strokeWidth="1.300" /></Icon></ToolButton>
    <ToolButton aria-label="フィボナッチ"><Icon><path d="M1 2h18M1 7h18M1 12h18M1 17h12" stroke={g} strokeWidth="1.500" strokeDasharray="2 1" /><path d="M15 21v-6h5M15 18h4" stroke={g} strokeWidth="1.400" /></Icon></ToolButton>
    <ToolButton aria-label="テキスト"><Icon><path d="M6 18l4.500-13h1L16 18M8 13.500h6" stroke={g} strokeWidth="2.400" /></Icon></ToolButton>
    <ToolButton aria-label="テキストラベル"><Icon><rect x="3" y="4" width="15" height="15" stroke={g} strokeDasharray="1 1" /><path d="M6 7h9M10.500 7v11" stroke={g} strokeWidth="2.200" /><circle cx="3" cy="3" r="1.500" fill={g} /></Icon></ToolButton>
    <SplitButton aria-label="矢印"><Icon><path d="M6 2l4 4-4 4-4-4zM15 20l4-4h-8z" fill={g} /><path d="M7 11l2 3 4-5M12 5l3-3 2 3" stroke={g} strokeWidth="1.800" /></Icon><Caret /></SplitButton>
  </ToolGroup>
);

const MarketWatch = () => (
  <Panel $grow={388}>
    <PanelHead><PanelTitle>気配値表示: 08:20:24</PanelTitle><CloseButton aria-label="閉じる"><Cross /></CloseButton></PanelHead>
    <PanelBox>
      <Quotes>
        <thead><tr><th>通貨ペア</th><th>Bid</th><th>Ask</th></tr></thead>
        <tbody>
          {quotes.map(([name, value, up]) => (
            <tr key={name}><td><Pair><Arrow up={up} />{name}</Pair></td><Quote $up={up}>{value}</Quote><Quote $up={up}>{value}</Quote></tr>
          ))}
        </tbody>
      </Quotes>
    </PanelBox>
    <Tabs><Tab $on $w={111}>通貨ペアリスト</Tab><Tab $w={98}>ティックチャート</Tab></Tabs>
  </Panel>
);

const Navigator = () => (
  <Panel $grow={383}>
    <PanelHead><PanelTitle>ナビゲーター</PanelTitle><CloseButton aria-label="閉じる"><Cross /></CloseButton></PanelHead>
    <PanelBox>
      <Tree>
        <Branches>{indicators.map((name, i) => <Branch key={i}><HatIcon gold={builtIn.includes(name)} />{name}</Branch>)}</Branches>
        <ScrollTrack><Thumb /></ScrollTrack>
      </Tree>
    </PanelBox>
    <Tabs><Tab $on $w={55}>全般</Tab><Tab $bar $w={90}>お気に入り</Tab></Tabs>
  </Panel>
);

const Chart = () => (
  <ChartWindow>
    <ChartSheet>
      <Plot>
        <ChartDrawing />
        <ChartName $x={3} $y={0}><Caret />GBPAUD,M5</ChartName>
        <Floating $x={3} $y={13}>リオンボイス@MA20 監視中...</Floating>
        <CheckList>
          {checks.map((text) => <CheckItem key={text}><CheckLabel><Check type="checkbox" />{text}</CheckLabel></CheckItem>)}
          <CheckItem $tail>リオ確認</CheckItem>
        </CheckList>
        <Clocks $x={323} $y={0} $size={14} $font={ARIAL}>{zones.map(([city, t]) => <span key={city}>{city} <b>{t}</b></span>)}</Clocks>
        <Countdown $x={728} $y={41} $size={21} $color="#0000ff" $font={`"Noto Sans CJK JP", sans-serif`}>次の5分足ローソクまで 4:37</Countdown>
        <Floating $x={417} $y={213} $size={19} $color="#a52a2a" $font={ARIAL}>Break Even Line</Floating>
        <Floating $x={29} $y={704} $size={13} $color="#909090">日本時間</Floating>
        <ChartName $r={4} $y={0}>ProController-V34<Icon s={15} box={16}><circle cx="8" cy="8" r="7" stroke="#000" /><circle cx="5.500" cy="6" r="1" fill="#000" /><circle cx="10.500" cy="6" r="1" fill="#000" /><path d="M4 9.500c2 3.500 6 3.500 8 0" stroke="#000" /></Icon></ChartName>
        <Floating $r={41} $y={90} $size={17} $color="#808080" $font={WIDE_FONT}>Spread: 14.</Floating>
        {[41, 454, 661].map((y, i) => <Floating key={y} $r={121} $y={y} $size={13} $color="#ff00ff" $font={ARIAL}>{i === 2 ? 40 : 20}</Floating>)}
        <Floating $r={8} $y={669} $size={14} $bold $color="#4c8ae4" $font={ARIAL}>+1682.00</Floating>
        <Floating $r={8} $y={683} $size={27} $bold $color="#4c8ae4" $font={ARIAL}>+4.6</Floating>
        <Floating $r={8} $y={702} $size={14} $bold $color="#2f4f5f" $font={ARIAL}>(0.37 | 365.67)</Floating>
        <Controller>
          <ControllerTitle>Pro Controller 改</ControllerTitle>
          <Total><span>Total</span><span>4.5pips</span></Total>
          <Action type="button" $wide $size={23} $h={34}>全通貨ペア決済</Action>
          <Action type="button" $h={34}>現通貨決済</Action><Action type="button" $h={34}>自動決済</Action>
          <Action type="button" $h={29}>Pips消去</Action><Action type="button" $h={29}>画面保存</Action>
          <Action type="button" $wide $grey $h={29}>x 閉じる</Action>
        </Controller>
      </Plot>
      <PriceAxis>
        {prices.map(([p, y]) => <Price key={p} $y={share(y)}>{p}</Price>)}
        {tags.map(([p, y, bg]) => <Price key={p} $y={share(y)} $bg={bg}>{p}</Price>)}
      </PriceAxis>
      <TimeAxis>{times.map((t) => <Time key={t}>{t}</Time>)}</TimeAxis>
    </ChartSheet>
    <ChartTabs>
      <Tab $w={110}>GBPAUD,M1</Tab><Tab $on $w={109}>GBPAUD,M5</Tab><Tab $bar $w={116}>GBPAUD,M15</Tab><Tab $bar $w={108}>GBPAUD,H1</Tab>
      <TabArrows>
        <Icon s={10} box={10}><path d="M6 1v8L2 5z" fill="#a0a0a0" /></Icon>
        <Icon s={10} box={10}><path d="M3 1v8l4-4z" fill="#a0a0a0" /></Icon>
      </TabArrows>
    </ChartTabs>
  </ChartWindow>
);

const OrderPanel = () => (
  <Terminal>
    <TerminalSide><CloseButton aria-label="閉じる"><Cross s={8} /></CloseButton><TerminalTitle>ターミナル</TerminalTitle></TerminalSide>
    <TerminalBody>
      <Orders>
        <colgroup>{orderCols.map(([, w], i) => <col key={i} style={{ width: w }} />)}</colgroup>
        <thead><tr>{orderCols.map(([h], i) => <th key={i}>{h}{i === 0 && <SortMark>/</SortMark>}</th>)}</tr></thead>
        <tbody>
          <tr>
            <td><OrderId><Icon s={18} box={18}><path d="M2 1h8l4 4v12H2z" fill="#fff" stroke="#555" /><path d="M10 1v4h4" stroke="#555" /><circle cx="12.500" cy="13" r="4.500" fill="#e03c20" stroke="#901c0c" /></Icon>4641935</OrderId></td>
            <OpenTime>2024.09.02 05:25</OpenTime><td /><td /><td>gbpaud</td><td>1.94110</td><td>1.94360</td><td>1.93950</td><td>1.94065</td><td>-325</td><td>0</td>
            <td><Profit>45<Cross s={13} c="#909090" /></Profit></td>
          </tr>
        </tbody>
      </Orders>
      <TerminalTabs>
        <Tab $on $w={54}>取引</Tab>
        {terminalTabs.map(([t, w, n]) => <Tab key={t} $bar $w={w}>{t}{n && <Count> {n}</Count>}</Tab>)}
      </TerminalTabs>
    </TerminalBody>
    <Hint role="tooltip">Great Britain Pound vs Australian Dollar<br />10955 バー, 最終価格 1.94054</Hint>
  </Terminal>
);

const Apps = () => (
  <>
    <App_ aria-label="タスクビュー"><Icon s={32} box={32}><rect x="9" y="3" width="22" height="20" rx="2" fill="#e8e8ec" /><rect x="2" y="10" width="20" height="19" rx="2" fill="#77797f" opacity=".9" /><rect x="9" y="10" width="13" height="13" fill="#b4b6bc" /></Icon></App_>
    <App_ aria-label="Copilot"><Icon s={32} box={32}><path d="M9 2h9c3 0 3 3 4 6h-5l-6 15H6c-5 0-5-4-4-8L5 6c1-3 2-4 4-4z" fill="#2c8cf0" /><path d="M3 12l3-7c1-2 2-3 5-3l-1 9z" fill="#38c8d8" /><path d="M2 17c-1 4 0 6 4 6h5l2-7z" fill="#f4cc3c" /><path d="M23 30h-9c-3 0-3-3-4-6h5l6-15h5c5 0 5 4 4 8l-3 9c-1 3-2 4-4 4z" fill="#c860e8" /><path d="M10 24c1 4 2 6 5 6h4l4-7z" fill="#f4703c" /><path d="M29 10c3 3-1 10-3 13l-9-2z" fill="#f88cb0" /></Icon></App_>
    <App_ $state="open" aria-label="エクスプローラー"><Icon s={32} box={32}><path d="M1 4h10l3 4h16v20H1z" fill="#e8a420" /><path d="M1 10h30v19H1z" fill="#fccc4c" /><path d="M7 29v-5c0-2 1-3 3-3h12c2 0 3 1 3 3v5z" fill="#1c78d0" /></Icon></App_>
    <App_ $state="open" aria-label="アプリ"><Icon s={32} box={32}>
      <rect x="2" y="2" width="28" height="28" fill="#fff" />
      <rect x="4" y="4" width="24" height="24" stroke="#e01818" strokeWidth="3.400" strokeDasharray="3.200 .8" />
      <rect x="7.500" y="7.500" width="17" height="17" fill="#3c0808" />
      <path d="M10 9h12v8H10zM15 13h3M10 21h12M16 18v5" stroke="#f03020" strokeWidth="2.200" />
    </Icon></App_>
    <App_ $state="active" aria-label="MetaTrader"><Icon s={32} box={32}><path d="M6 5h4l12 22h5" stroke="#74748c" strokeWidth="3" /><path d="M26 5l-8 10M14 18L6 27" stroke="#8c8ca4" strokeWidth="4" /></Icon></App_>
    <App_ aria-label="TradingView"><Icon s={32} box={32}><rect x="1" y="1" width="30" height="30" rx="6" fill="#131722" /><path d="M5 10h11v12h-5v-7H5zM22 10h6l-5 12h-5z" fill="#fff" /><circle cx="19" cy="12.500" r="2.500" fill="#fff" /></Icon></App_>
    <App_ $state="open" aria-label="ストア"><svg width="34" height="34" viewBox="0 0 34 34" fill="none"><rect x="2" y="12" width="22" height="20" rx="2" fill="#f0f0f2" /><path d="M8 12c0-6 10-6 10 0" stroke="#c8c8cc" strokeWidth="2" /><path d="M6 27a7 7 0 0114 0z" fill="#e84030" /><path d="M6 27h5v3z" fill="#30a850" /><path d="M15 25h5l-2 5z" fill="#fcc820" /><circle cx="13" cy="26" r="3" fill="#2c78e8" stroke="#fff" /><Avatar /></svg></App_>
    <App_ $state="open" aria-label="Chrome"><svg width="34" height="34" viewBox="0 0 34 34" fill="none"><circle cx="15" cy="18" r="14" fill="#30a850" /><path d="M15 18L3 11A14 14 0 0127 11z" fill="#e84030" /><path d="M15 18L27 11A14 14 0 0115 32z" fill="#fcc820" /><circle cx="15" cy="18" r="6.500" fill="#2c78e8" stroke="#fff" strokeWidth="2" /><Avatar /></svg></App_>
    <App_ $state="open" aria-label="コントロールパネル"><Icon s={32} box={32}><rect x="1" y="4" width="30" height="23" rx="1" fill="#58c0f0" stroke="#a8e0fc" /><circle cx="11" cy="13" r="6" fill="#fff" /><path d="M11 13V7a6 6 0 010 12z" fill="#1c70c8" /><path d="M11 13h6a6 6 0 01-6 6z" fill="#f0a828" /><circle cx="24" cy="10" r="2.500" stroke="#fff" strokeWidth="2" /><circle cx="24" cy="18" r="2.500" stroke="#fff" strokeWidth="2" /><path d="M6 23h20" stroke="#1c70c8" strokeWidth="2" /></Icon></App_>
    <App_ $state="open" aria-label="アプリ"><Icon s={32} box={32}><path d="M7 7c-1-6 5-8 9-6 4-2 10 0 9 6v8l4 8-4 5H7l-4-5 4-8z" fill="#f4f0ea" /><circle cx="13" cy="8" r="2" fill="#222" /><circle cx="19" cy="8" r="2" fill="#222" /><path d="M13 11h6l-3 3z" fill="#f09060" /><path d="M5 30c0-4 8-4 9 0zM18 30c0-4 8-4 9 0z" fill="#f0a828" /></Icon></App_>
  </>
);

export default function App() {
  return (
    <Desktop>
      <Global />
      <TitleBar>
        <AxioryMark s={15} />
        <Title>2209611: AxioryAsia-06Live - Axiory Global Ltd. - [GBPAUD,M5]</Title>
        <WindowButton aria-label="最小化"><Icon s={12} box={12}><path d="M0 6.500h12" stroke="#000" /></Icon></WindowButton>
        <WindowButton aria-label="元に戻す"><Icon s={12} box={12}><rect x=".5" y="2.500" width="9" height="9" rx="2" stroke="#000" /><path d="M3 .5h6a2.500 2.500 0 012.500 2.500v6" stroke="#000" /></Icon></WindowButton>
        <WindowButton aria-label="閉じる"><Cross s={13} w={1} /></WindowButton>
      </TitleBar>
      <MenuBar>
        <Icon s={21}><rect x="1" y="1" width="15" height="13" fill="#fff" stroke="#3c8cd8" strokeDasharray="2 1" strokeWidth="1.500" /><rect x="6" y="8" width="15" height="13" fill="#fff" stroke="#3c8cd8" strokeWidth="1.500" /><path d="M3 8l3-3 3 3 3-4M8 16l3-3 2 4 3-5 2 4" stroke="#3c8cd8" /></Icon>
        <MenuList>{menus.map((m) => <MenuItem key={m}>{m}</MenuItem>)}</MenuList>
        <ChildButton aria-label="最小化"><Icon s={10} box={10}><path d="M2 8h6" stroke="#6c7c94" strokeWidth="1.800" /></Icon></ChildButton>
        <ChildButton aria-label="元に戻す"><Icon s={10} box={10}><rect x="1" y="4" width="5.500" height="4.500" stroke="#6c7c94" /><path d="M3 3.500V1.500h6v4H7" stroke="#6c7c94" strokeWidth="1.200" /></Icon></ChildButton>
        <ChildButton aria-label="閉じる"><Cross s={8} c="#6c7c94" w={2.2} /></ChildButton>
      </MenuBar>
      <ToolRow>
        <MainTools />
        <ChartTools />
        <ToolEnd>
          <ToolButton $w={20} aria-label="検索"><Icon s={18} box={18}><path d="M8 10l-6 6" stroke="#2c5cb8" strokeWidth="3.500" /><circle cx="11.500" cy="6.500" r="5" fill="#eef4ff" stroke="#3c78d8" strokeWidth="2" /></Icon></ToolButton>
          <Notice aria-label="通知 1"><Icon s={28} box={28}><path d="M3 17c0-6 6-8 11-8s9 3 9 7-5 7-12 7l-5 3 1-4c-3-1-4-3-4-5z" fill="#ececec" stroke="#9a9a9a" strokeWidth="1.500" /></Icon><Badge>1</Badge></Notice>
        </ToolEnd>
      </ToolRow>
      <ToolRow $last>
        <LineTools />
        <ToolGroup>{periods.map((p) => <PeriodButton key={p} $on={p === "M5"}>{p}</PeriodButton>)}</ToolGroup>
      </ToolRow>
      <Workspace>
        <Dock><MarketWatch /><Navigator /></Dock>
        <Chart />
      </Workspace>
      <OrderPanel />
      <StatusBar>
        <StatusText>F1キーでヘルプが表示されます</StatusText>
        <StatusCell $w={149}>Default</StatusCell>
        {[131, 89, 89, 85, 87, 84].map((w, i) => <StatusCell key={i} $w={w} />)}
        <StatusCell $w={182}>
          <svg width="32" height="17" shapeRendering="crispEdges" aria-hidden="true">
            {[0, 1, 2, 3, 4, 5, 6, 7].map((i) => <g key={i}><rect x={i * 4} y="0" width="3" height={12 - i} fill="#48a020" /><rect x={i * 4} y={13 - i} width="3" height={4 + i} fill="#183878" /></g>)}
          </svg>
          563/2 kb
        </StatusCell>
      </StatusBar>
      <TaskBar>
        <Start aria-label="スタート"><Icon s={30} box={30}><path d="M0 0h14.500v14.500H0zM15.500 0H30v14.500H15.500zM0 15.500h14.500V30H0zM15.500 15.500H30V30H15.500z" fill="#4cb4f8" /></Icon></Start>
        <Search><Icon s={18} box={18}><circle cx="8" cy="7" r="5.500" stroke="#fff" strokeWidth="2" /><path d="M12 11l5 5.500" stroke="#fff" strokeWidth="2" /></Icon>検索</Search>
        <Apps />
        <Tray>
          <TrayButton $w={40} aria-label="隠れているアイコン"><Icon s={14} box={14}><path d="M2 10l5-6 5 6" stroke="#fff" strokeWidth="2" /></Icon></TrayButton>
          <TrayButton $w={40} aria-label="OneDrive"><Icon s={22}><path d="M5 17c-5-1-4-7 0-7 1-6 9-7 11-1 5 0 6 7 1 8z" fill="#a8a4b4" /><path d="M5 17c-4-1-4-5-1-6l6 2 8-2c4 1 3 6-1 6z" fill="#fff" /></Icon></TrayButton>
          <TrayButton $w={42} aria-label="IME"><Icon s={20} box={20}><path d="M3 19L10 1l7 18M5.500 13h9" stroke="#fff" strokeWidth="1.400" /></Icon></TrayButton>
          <TrayButton $w={52} aria-label="日本語"><Icon s={22}><circle cx="11" cy="11" r="9.500" stroke="#fff" strokeWidth="1.400" /><path d="M13 5v8c0 4-5 4-5 1" stroke="#fff" strokeWidth="1.400" /></Icon></TrayButton>
          <TrayButton $w={36} aria-label="Wi-Fi"><Icon s={21}><path d="M1 9c6-6 14-6 20 0M4 12c4-4 10-4 14 0M7.500 15c2-2 5-2 7 0" stroke="#fff" strokeWidth="1.800" /><circle cx="11" cy="18" r="1.800" fill="#fff" /></Icon></TrayButton>
          <TrayButton $w={30} aria-label="音量"><Icon s={20}><path d="M1 8h4l5-4v14l-5-4H1zM13 8c2 2 2 4 0 6M16 5.500c3 3 3 8 0 11M18.500 3c4 5 4 11 0 16" stroke="#fff" strokeWidth="1.400" /></Icon></TrayButton>
          <TrayButton $w={30} aria-label="バッテリー"><Icon s={21}><rect x="3" y="6" width="16" height="12" rx="3" stroke="#fff" strokeWidth="1.500" /><path d="M8 9h9v6H6v-3z" fill="#fff" /><path d="M20 10v4" stroke="#fff" strokeWidth="2" /><path d="M5 1L1 8h3v4l4-6H5z" fill="#fff" /></Icon></TrayButton>
          <Clock>14:20<br />2024/09/02</Clock>
          <TrayButton $w={22} aria-label="通知"><Icon s={22}><path d="M11 1c5 0 6 4 6 8l2 7H3l2-7c0-4 1-8 6-8z" fill="#8ee4ec" /><path d="M8 18h6c-1 3-5 3-6 0z" fill="#8ee4ec" /></Icon></TrayButton>
        </Tray>
      </TaskBar>
    </Desktop>
  );
}
